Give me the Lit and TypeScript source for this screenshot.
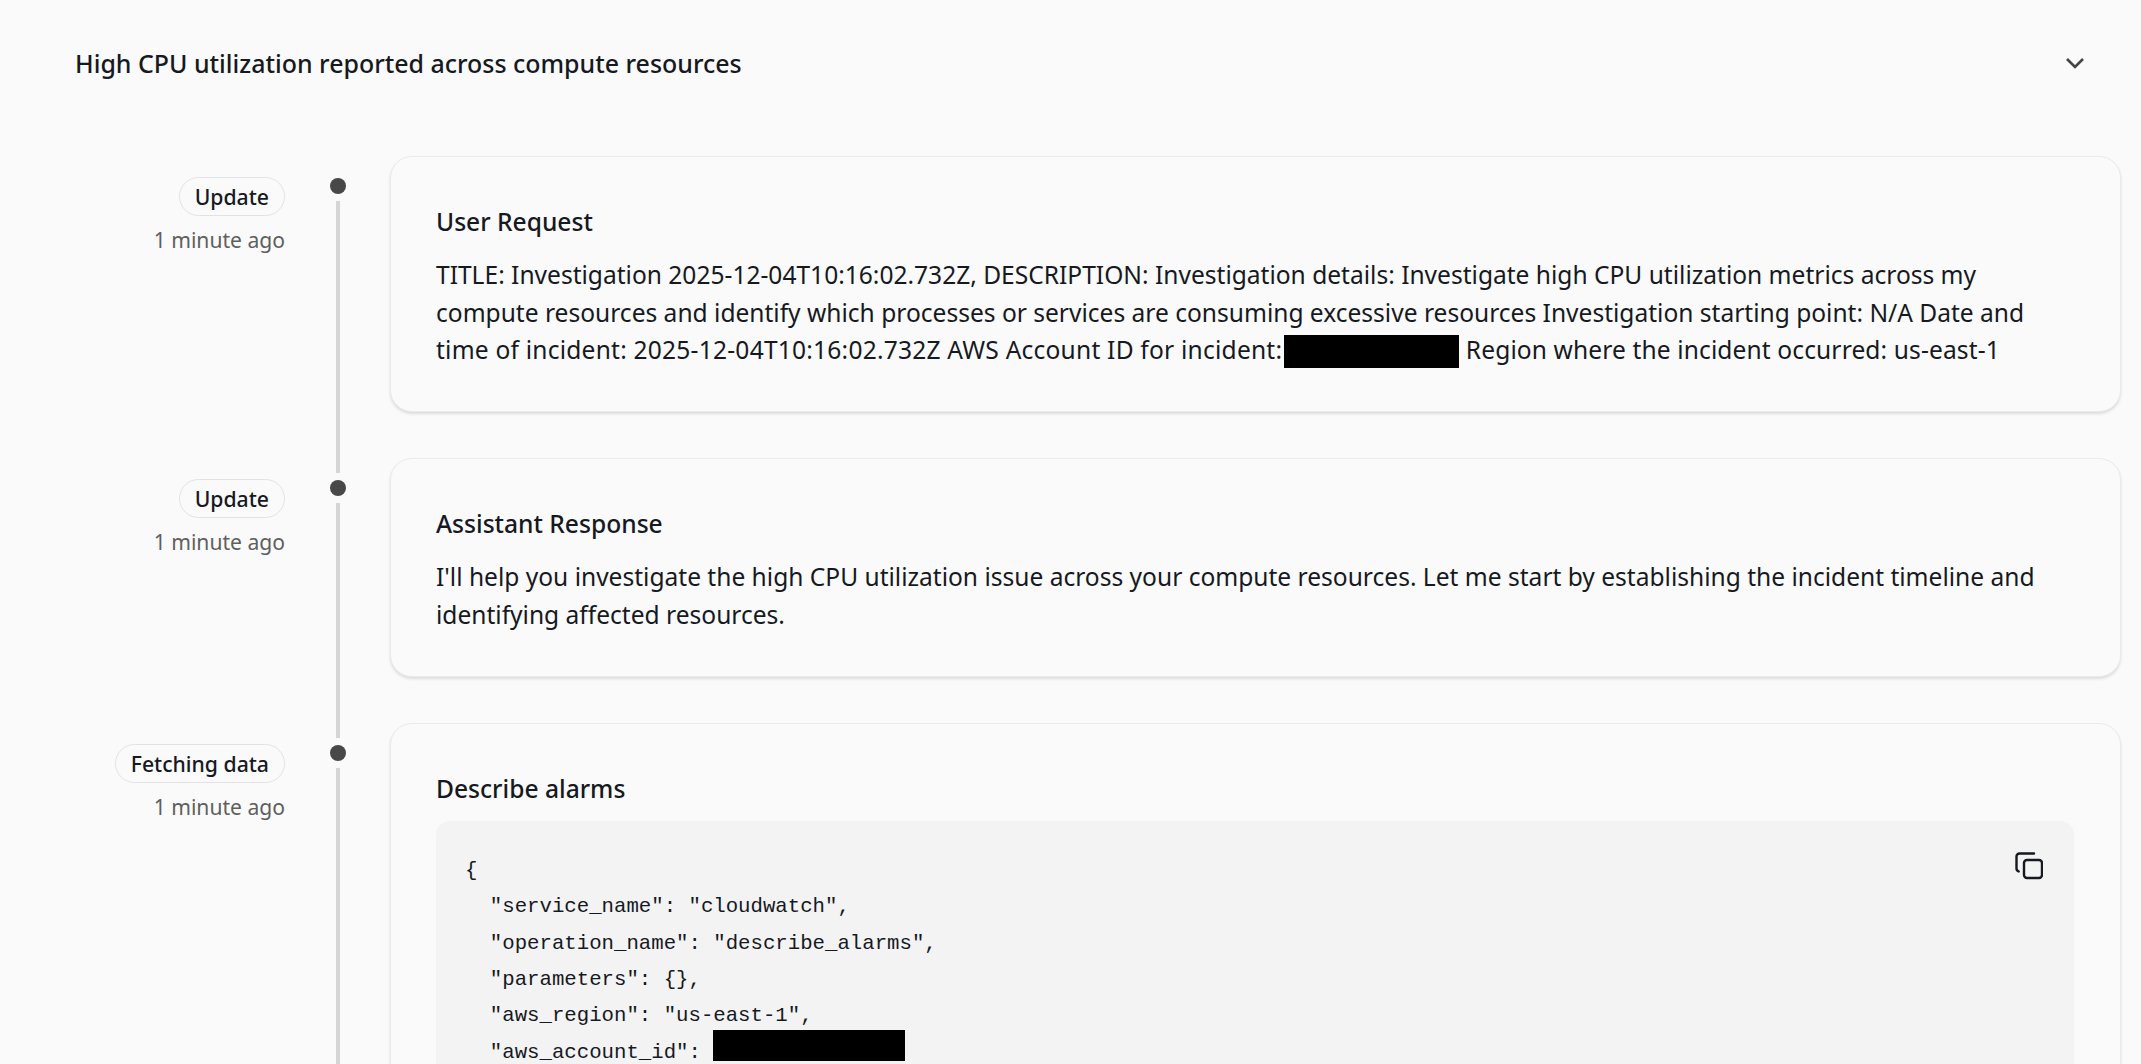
import { LitElement, html, css } from "lit";
import { customElement } from "lit/decorators.js";

@customElement("app-root")
export class AppRoot extends LitElement {
  static styles = css`
    :host {
      display: block;
      height: 100vh;
      overflow: hidden;
      background: #fafafa;
      color: #16191f;
      font-family: "Noto Sans", "Open Sans", sans-serif;
      font-size: 24px;
    }
    .head {
      display: flex;
      justify-content: space-between;
      align-items: flex-start;
      padding: 43px 56px 0 75px;
      height: 156px;
      box-sizing: border-box;
    }
    .head h1 {
      margin: 0;
      font-size: 24.95px;
      line-height: 40px;
      font-weight: 500;
    }
    .head svg {
      margin-top: 13px;
    }
    .rows {
      padding: 0 20px 0 0;
    }
    .row {
      display: flex;
      padding-bottom: 46px;
    }
    .meta {
      width: 285px;
      flex: none;
      padding-top: 21px;
      display: flex;
      flex-direction: column;
      align-items: flex-end;
    }
    .pill {
      border: 1px solid #e3e3e3;
      border-radius: 20px;
      height: 39px;
      box-sizing: border-box;
      padding: 0 15px;
      line-height: 37px;
      font-size: 21.2px;
      font-weight: 500;
    }
    .ago {
      margin-top: 6px;
      font-size: 21.1px;
      line-height: 36px;
      color: #5f5f5f;
    }
    .track {
      width: 105px;
      flex: none;
      padding-top: 22px;
      margin-bottom: -61px;
      display: flex;
      flex-direction: column;
      align-items: center;
    }
    .dot {
      width: 16px;
      height: 16px;
      border-radius: 50%;
      background: #484848;
      flex: none;
    }
    .line {
      width: 4px;
      flex: 1;
      margin-top: 7px;
      background: #d5d5d5;
    }
    .card {
      flex: 1;
      min-width: 0;
      box-sizing: border-box;
      background: #fafafa;
      border: 1px solid #ebebeb;
      border-radius: 22px;
      box-shadow: 0 2px 3px rgba(0, 0, 0, 0.12);
      padding: 46px 46px 42.5px 45px;
    }
    .card.reply {
      padding-bottom: 42.6px;
    }
    .card h2 {
      margin: 0 0 15px;
      font-size: 24.6px;
      line-height: 38px;
      font-weight: 500;
    }
    .card p {
      margin: 0;
      font-size: 24.55px;
      line-height: 37.5px;
    }
    .last-line {
      letter-spacing: 0.22px;
    }
    .tail {
      letter-spacing: 0.12px;
    }
    .mask {
      display: inline-block;
      background: #000;
    }
    .mask-text {
      width: 175px;
      height: 33px;
      margin-left: 2px;
      vertical-align: -9px;
    }
    .mask-code {
      width: 192px;
      height: 31px;
      margin-top: -6px;
      vertical-align: -3px;
    }
    .code {
      position: relative;
      margin: -2px 0 0;
      background: #f3f3f3;
      border-radius: 14px;
      padding: 32.5px 29px 60px;
      font-family: "Liberation Mono", monospace;
      font-size: 20.7px;
      line-height: 36.3px;
      white-space: pre;
    }
    .copy {
      position: absolute;
      top: 31px;
      right: 31px;
    }
  `;

  render() {
    return html`
      <div class="head">
        <h1>High CPU utilization reported across compute resources</h1>
        <svg width="20" height="14" viewBox="0 0 20 14" fill="none" stroke="#444" stroke-width="2.6">
          <path d="M2 3l8 8 8-8" />
        </svg>
      </div>
      <div class="rows">
        <div class="row">
          <div class="meta">
            <span class="pill">Update</span>
            <span class="ago">1 minute ago</span>
          </div>
          <div class="track"><i class="dot"></i><i class="line"></i></div>
          <section class="card">
            <h2>User Request</h2>
            <p>
              TITLE: Investigation 2025-12-04T10:16:02.732Z, DESCRIPTION: Investigation details: Investigate high CPU
              utilization metrics across my compute resources and identify which processes or services are consuming
              excessive resources Investigation starting point: N/A Date and
              <span class="last-line"
                >time of incident: 2025-12-04T10:16:02.732Z AWS Account ID for incident:<span
                  class="mask mask-text"
                ></span>
                <span class="tail">Region where the incident occurred: us-east-1</span></span
              >
            </p>
          </section>
        </div>
        <div class="row">
          <div class="meta">
            <span class="pill">Update</span>
            <span class="ago">1 minute ago</span>
          </div>
          <div class="track"><i class="dot"></i><i class="line"></i></div>
          <section class="card reply">
            <h2>Assistant Response</h2>
            <p>
              I'll help you investigate the high CPU utilization issue across your compute resources. Let me start by
              establishing the incident timeline and identifying affected resources.
            </p>
          </section>
        </div>
        <div class="row">
          <div class="meta">
            <span class="pill">Fetching data</span>
            <span class="ago">1 minute ago</span>
          </div>
          <div class="track"><i class="dot"></i><i class="line"></i></div>
          <section class="card">
            <h2>Describe alarms</h2>
            <pre class="code"><svg class="copy" width="28" height="28" viewBox="0 0 28 28" fill="none" stroke="#16191f" stroke-width="2.4" stroke-linecap="round"><rect x="9" y="8" width="18" height="18" rx="3"/><path d="M19 1.5H4.5a3 3 0 0 0-3 3v12a3 3 0 0 0 2.2 2.9"/></svg>{
  "service_name": "cloudwatch",
  "operation_name": "describe_alarms",
  "parameters": {},
  "aws_region": "us-east-1",
  "aws_account_id": <span class="mask mask-code"></span></pre>
          </section>
        </div>
      </div>
    `;
  }
}
